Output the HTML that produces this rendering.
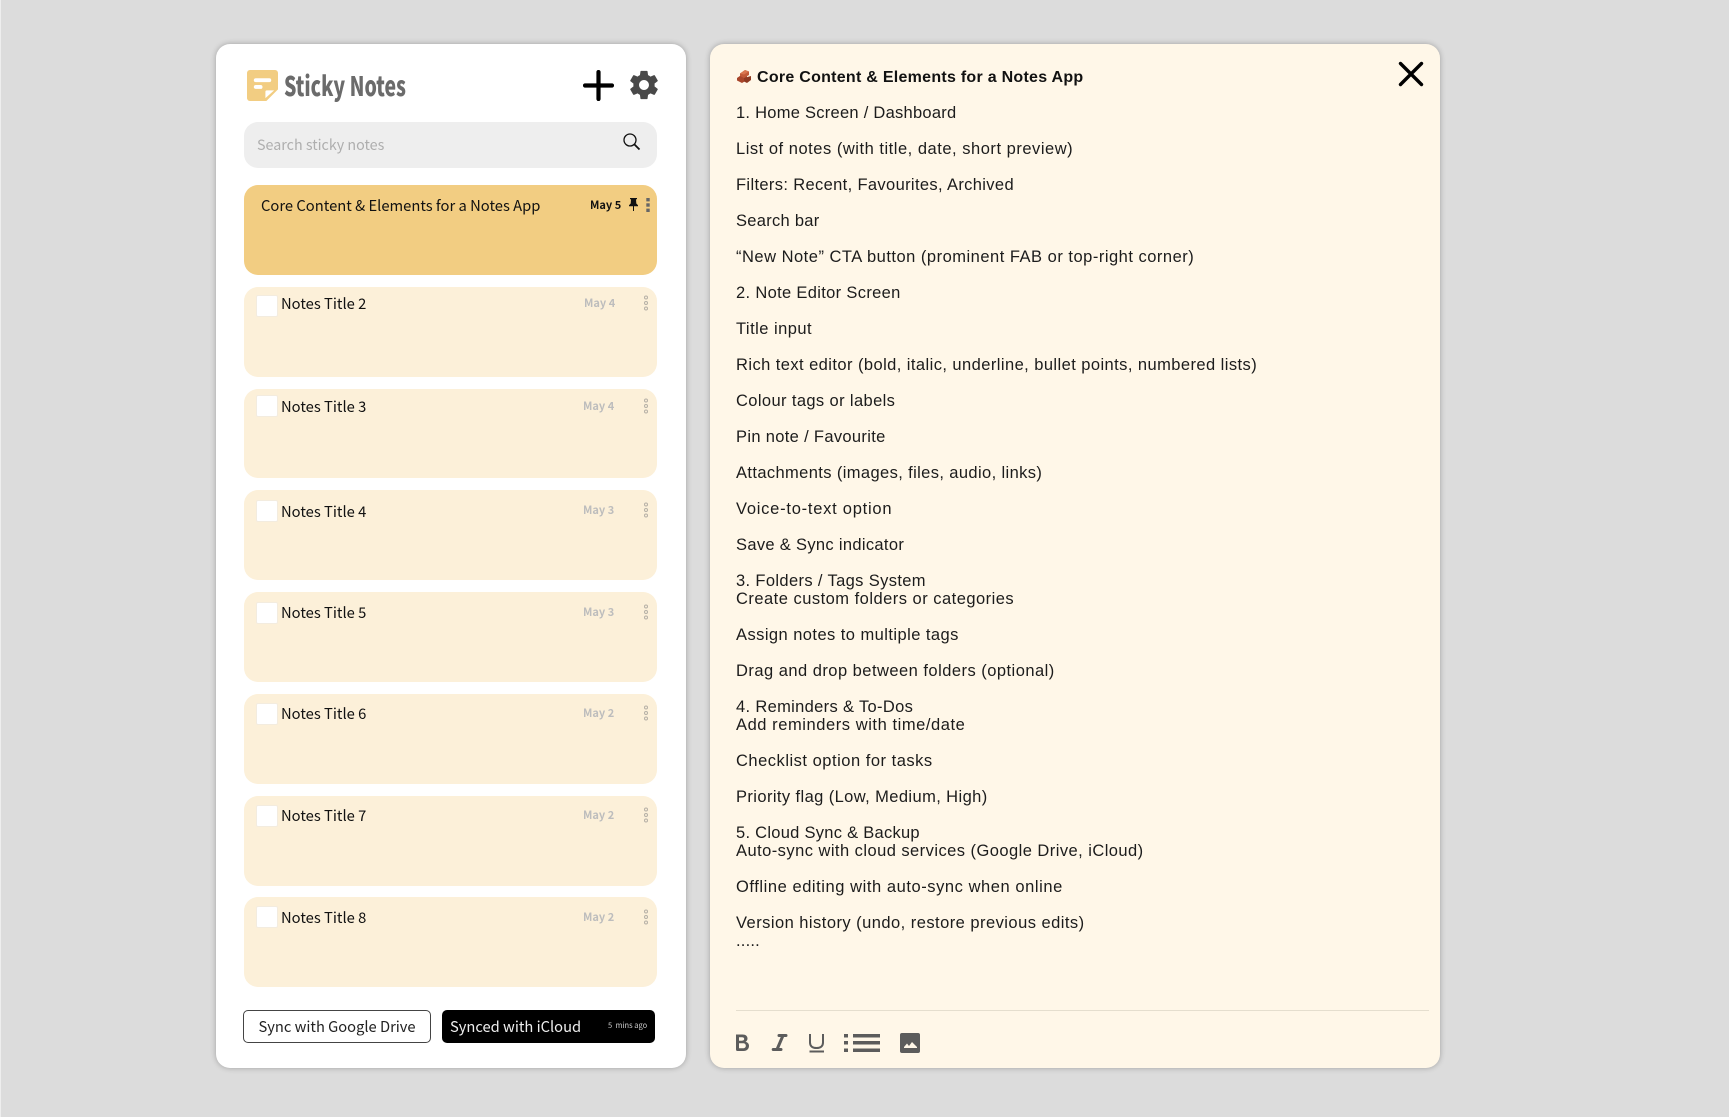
<!DOCTYPE html>
<html><head><meta charset="utf-8"><style>
html,body{margin:0;padding:0;width:1729px;height:1117px;overflow:hidden;background:#dcdcdc}
*{box-sizing:border-box}
.a{position:absolute}
.cjk{font-family:"Noto Sans CJK JP","Liberation Sans",sans-serif}
.panel{position:absolute;top:44px;height:1024px;border-radius:14px;box-shadow:0 0 6px rgba(0,0,0,.28)}
.card{position:absolute;left:244px;width:413px;height:90px;border-radius:14px;background:#fcf0d9}
.chk{position:absolute;left:256px;width:22px;height:22px;background:#fff;border:1px solid #f3ecdf;border-radius:2px}
.t{position:absolute;left:281px;font:14.75px/20px "Noto Sans CJK JP",sans-serif;color:#111;white-space:nowrap}
.d{position:absolute;font:600 11px/16px "Noto Sans CJK JP",sans-serif;color:#bdbdbd;white-space:nowrap}
.dots{position:absolute;left:643px;width:6px;height:16px}
#txt{position:absolute;left:736px;font:16.5px/18px "Liberation Sans",sans-serif;color:#1c1c1c;white-space:nowrap}
#txt p{margin:0 0 18px}
</style></head><body>
<div class="a" style="left:0;top:0;width:1px;height:1117px;background:#eee"></div>
<div class="panel" style="left:216px;width:470px;background:#fff"></div>
<div class="panel" style="left:710px;width:730px;background:#fff7e8"></div>

<svg class="a" style="left:247px;top:70px" width="31" height="31" viewBox="0 0 32 32"><path d="M3 0H29a3 3 0 0 1 3 3V20L20 32H3a3 3 0 0 1-3-3V3a3 3 0 0 1 3-3z" fill="#f2cd82"/><rect x="7" y="8.5" width="18" height="4" rx="2" fill="#fff"/><rect x="7" y="15.5" width="9" height="4" rx="2" fill="#fff"/><path d="M19 29V22.500a1.500 1.500 0 0 1 1.500-1.500H28z" fill="#fff"/></svg>
<div class="a cjk" style="left:284px;top:66px;font-weight:900;font-size:27px;line-height:38px;color:#6b6b6b;transform:scaleX(.72);transform-origin:0 0;white-space:nowrap">Sticky Notes</div>
<svg class="a" style="left:583px;top:70px" width="31" height="31" viewBox="0 0 31 31"><path d="M15.500 2V29M2 15.500H29" stroke="#000" stroke-width="4.200" stroke-linecap="round"/></svg>
<svg class="a" style="left:627px;top:68px" width="34" height="34" viewBox="0 0 24 24"><path fill="#484848" d="M19.430 12.980c.04-.32.07-.64.07-.98s-.03-.66-.07-.98l2.110-1.650c.19-.15.240-.42.120-.640l-2-3.460c-.12-.22-.39-.3-.61-.22l-2.490 1c-.52-.4-1.080-.73-1.690-.98l-.38-2.650A.488.488 0 0 0 14 2h-4c-.25 0-.46.18-.49.42l-.38 2.650c-.61.25-1.170.59-1.690.98l-2.490-1c-.23-.09-.49 0-.61.22l-2 3.460c-.13.22-.07.49.12.640l2.110 1.650c-.04.32-.07.65-.07.98s.03.66.07.98l-2.110 1.650c-.19.15-.24.42-.12.640l2 3.460c.12.22.39.3.61.22l2.490-1c.52.4 1.080.73 1.690.98l.38 2.650c.03.24.24.42.49.42h4c.25 0 .46-.18.49-.42l.38-2.650c.61-.25 1.170-.59 1.690-.98l2.490 1c.23.09.49 0 .61-.22l2-3.460c.12-.22.07-.49-.12-.640l-2.110-1.650zM12 15.500c-1.930 0-3.500-1.570-3.500-3.500s1.570-3.500 3.500-3.500 3.500 1.570 3.500 3.500-1.570 3.500-3.500 3.500z"/></svg>

<div class="a" style="left:244px;top:122px;width:413px;height:46px;border-radius:14px;background:#eee"></div>
<div class="a cjk" style="left:257px;top:134px;font-size:14.3px;line-height:22px;color:#aeaeae;white-space:nowrap">Search sticky notes</div>
<svg class="a" style="left:622px;top:132px" width="19" height="19" viewBox="0 0 19 19"><circle cx="8" cy="8" r="6" fill="none" stroke="#111" stroke-width="1.300"/><path d="M12.500 12.500L17.500 17.500" stroke="#111" stroke-width="1.800"/></svg>

<div class="card" style="top:185px;background:#f2cd82"></div>
<div class="t" style="left:261px;top:196px">Core Content &amp; Elements for a Notes App</div>
<div class="d" style="left:590px;top:197px;color:#111">May 5</div>
<svg class="a" style="left:629px;top:198px" width="9" height="13" viewBox="0 0 9 13"><path d="M1 0H8V1.200H7L7.300 5.500L9 7.300V8.300H5V13H4V8.300H0V7.300L1.700 5.500L2 1.200H1z" fill="#111"/></svg>
<svg class="dots" style="left:645px;top:197px;height:16px" viewBox="0 0 6 16"><g fill="#666"><rect x="1.300" y="1" width="3.400" height="3.400"/><rect x="1.300" y="6.300" width="3.400" height="3.400"/><rect x="1.300" y="11.600" width="3.400" height="3.400"/></g></svg>

<div class="card" style="top:287px"></div><div class="chk" style="top:295px"></div><div class="t" style="top:294px">Notes Title 2</div><div class="d" style="left:584px;top:295px">May 4</div>
<svg class="dots" style="left:643px;top:295px" viewBox="0 0 6 16"><g fill="none" stroke="#b5b0a6" stroke-width="1"><circle cx="3" cy="2.500" r="1.500"/><circle cx="3" cy="8" r="1.500"/><circle cx="3" cy="13.500" r="1.500"/></g></svg>

<div class="card" style="top:389px;height:89px"></div><div class="chk" style="top:395px"></div><div class="t" style="top:397px">Notes Title 3</div><div class="d" style="left:583px;top:398px">May 4</div>
<svg class="dots" style="left:643px;top:398px" viewBox="0 0 6 16"><g fill="none" stroke="#b5b0a6" stroke-width="1"><circle cx="3" cy="2.500" r="1.500"/><circle cx="3" cy="8" r="1.500"/><circle cx="3" cy="13.500" r="1.500"/></g></svg>

<div class="card" style="top:490px"></div><div class="chk" style="top:500px"></div><div class="t" style="top:502px">Notes Title 4</div><div class="d" style="left:583px;top:502px">May 3</div>
<svg class="dots" style="left:643px;top:502px" viewBox="0 0 6 16"><g fill="none" stroke="#b5b0a6" stroke-width="1"><circle cx="3" cy="2.500" r="1.500"/><circle cx="3" cy="8" r="1.500"/><circle cx="3" cy="13.500" r="1.500"/></g></svg>

<div class="card" style="top:592px"></div><div class="chk" style="top:602px"></div><div class="t" style="top:603px">Notes Title 5</div><div class="d" style="left:583px;top:604px">May 3</div>
<svg class="dots" style="left:643px;top:604px" viewBox="0 0 6 16"><g fill="none" stroke="#b5b0a6" stroke-width="1"><circle cx="3" cy="2.500" r="1.500"/><circle cx="3" cy="8" r="1.500"/><circle cx="3" cy="13.500" r="1.500"/></g></svg>

<div class="card" style="top:694px"></div><div class="chk" style="top:703px"></div><div class="t" style="top:704px">Notes Title 6</div><div class="d" style="left:583px;top:705px">May 2</div>
<svg class="dots" style="left:643px;top:705px" viewBox="0 0 6 16"><g fill="none" stroke="#b5b0a6" stroke-width="1"><circle cx="3" cy="2.500" r="1.500"/><circle cx="3" cy="8" r="1.500"/><circle cx="3" cy="13.500" r="1.500"/></g></svg>

<div class="card" style="top:796px"></div><div class="chk" style="top:805px"></div><div class="t" style="top:806px">Notes Title 7</div><div class="d" style="left:583px;top:807px">May 2</div>
<svg class="dots" style="left:643px;top:807px" viewBox="0 0 6 16"><g fill="none" stroke="#b5b0a6" stroke-width="1"><circle cx="3" cy="2.500" r="1.500"/><circle cx="3" cy="8" r="1.500"/><circle cx="3" cy="13.500" r="1.500"/></g></svg>

<div class="card" style="top:897px"></div><div class="chk" style="top:906px"></div><div class="t" style="top:908px">Notes Title 8</div><div class="d" style="left:583px;top:909px">May 2</div>
<svg class="dots" style="left:643px;top:909px" viewBox="0 0 6 16"><g fill="none" stroke="#b5b0a6" stroke-width="1"><circle cx="3" cy="2.500" r="1.500"/><circle cx="3" cy="8" r="1.500"/><circle cx="3" cy="13.500" r="1.500"/></g></svg>

<div class="a cjk" style="left:243px;top:1010px;width:188px;height:33px;border:1px solid #444;border-radius:5px;background:#fff;text-align:center;font-size:14.7px;line-height:31px;color:#222;white-space:nowrap">Sync with Google Drive</div>
<div class="a" style="left:442px;top:1010px;width:213px;height:33px;border-radius:5px;background:#000"></div>
<div class="a cjk" style="left:450px;top:1016px;font-size:14.7px;line-height:22px;color:#eee;white-space:nowrap">Synced with iCloud</div>
<div class="a cjk" style="left:608px;top:1020px;font-size:7.5px;line-height:12px;color:#ccc;white-space:nowrap">5&nbsp; mins ago</div>

<svg class="a" style="left:736px;top:68px" width="16" height="16" viewBox="0 0 16 16"><path d="M1 10L6 6.500L11 8V12L6 15L1 12.500z" fill="#a8452a"/><path d="M4 5.500L9 2L13 3.500L13 7L8 10L4 8z" fill="#c25a37"/><path d="M8 10L15 8V12L11 15L8 13.500z" fill="#8f3a22"/><path d="M4 5.500L9 2L13 3.500L8 6.500z" fill="#d9764f"/></svg>
<div class="a" style="left:757px;top:68px;font:700 16px/19px 'Liberation Sans',sans-serif;letter-spacing:.27px;color:#111;white-space:nowrap">Core Content &amp; Elements for a Notes App</div>

<div id="txt" style="top:104px">
<p style="letter-spacing:.26px">1. Home Screen / Dashboard</p>
<p style="letter-spacing:.52px">List of notes (with title, date, short preview)</p>
<p style="letter-spacing:.35px">Filters: Recent, Favourites, Archived</p>
<p style="letter-spacing:.28px">Search bar</p>
<p style="letter-spacing:.5px">“New Note” CTA button (prominent FAB or top-right corner)</p>
<p style="letter-spacing:.33px">2. Note Editor Screen</p>
<p style="letter-spacing:.47px">Title input</p>
<p style="letter-spacing:.43px">Rich text editor (bold, italic, underline, bullet points, numbered lists)</p>
<p style="letter-spacing:.38px">Colour tags or labels</p>
<p style="letter-spacing:.33px">Pin note / Favourite</p>
<p style="letter-spacing:.38px">Attachments (images, files, audio, links)</p>
<p style="letter-spacing:.75px">Voice-to-text option</p>
<p style="letter-spacing:.32px">Save &amp; Sync indicator</p>
<p><span style="letter-spacing:.36px">3. Folders / Tags System</span><br><span style="letter-spacing:.48px">Create custom folders or categories</span></p>
<p style="letter-spacing:.44px">Assign notes to multiple tags</p>
<p style="letter-spacing:.47px">Drag and drop between folders (optional)</p>
<p><span style="letter-spacing:.33px">4. Reminders &amp; To-Dos</span><br><span style="letter-spacing:.56px">Add reminders with time/date</span></p>
<p style="letter-spacing:.51px">Checklist option for tasks</p>
<p style="letter-spacing:.4px">Priority flag (Low, Medium, High)</p>
<p><span style="letter-spacing:.27px">5. Cloud Sync &amp; Backup</span><br><span style="letter-spacing:.45px">Auto-sync with cloud services (Google Drive, iCloud)</span></p>
<p style="letter-spacing:.56px">Offline editing with auto-sync when online</p>
<p><span style="letter-spacing:.46px">Version history (undo, restore previous edits)</span><br><span style="letter-spacing:.2px">.....</span></p>
</div>

<svg class="a" style="left:1397.500px;top:61px" width="26" height="26" viewBox="0 0 26 26"><path d="M2.500 2.500L23.500 23.500M23.500 2.500L2.500 23.500" stroke="#000" stroke-width="3.400" stroke-linecap="round"/></svg>

<div class="a" style="left:736px;top:1010px;width:693px;height:1px;background:#e5dece"></div>
<svg class="a" style="left:736px;top:1032px" width="190" height="24" viewBox="0 0 190 24" fill="#5c5c5c">
<path d="M0 2.500H6.500C9.800 2.500 11.500 4.200 11.500 6.500C11.500 8 10.700 9.200 9.500 9.800C11.700 10.400 13 11.800 13 13.800C13 17 11 19 7.500 19H1.500A1.500 1.500 0 0 1 0 17.500zM3 5.200V8.700H6C7.300 8.700 8.200 8 8.200 6.900S7.300 5.200 6 5.200zM3 11.200V16.200H7C8.700 16.200 9.800 15.300 9.800 13.700S8.700 11.200 7 11.200z"/>
<path d="M43 3.500H50M37.200 17.500H45M47 3.500L41 17.500" fill="none" stroke="#5c5c5c" stroke-width="3" stroke-linecap="round"/>
<path d="M74 2V10.500C74 14 76.300 16 80.500 16S87 14 87 10.500V2" fill="none" stroke="#5c5c5c" stroke-width="2"/><rect x="73.500" y="18.500" width="14.500" height="2"/>
<rect x="108" y="2" width="4" height="3.500"/><rect x="108" y="9" width="4" height="3.500"/><rect x="108" y="16.500" width="4" height="3.500"/>
<rect x="117" y="2" width="27" height="3.500"/><rect x="117" y="9" width="27" height="3.500"/><rect x="117" y="16.500" width="27" height="3.500"/>
<rect x="164" y="1" width="20" height="20" rx="2"/><path d="M168 15L171 11.500L173 14L176 10L181 15V16H168z" fill="#fff7e8"/>
</svg>
</body></html>
